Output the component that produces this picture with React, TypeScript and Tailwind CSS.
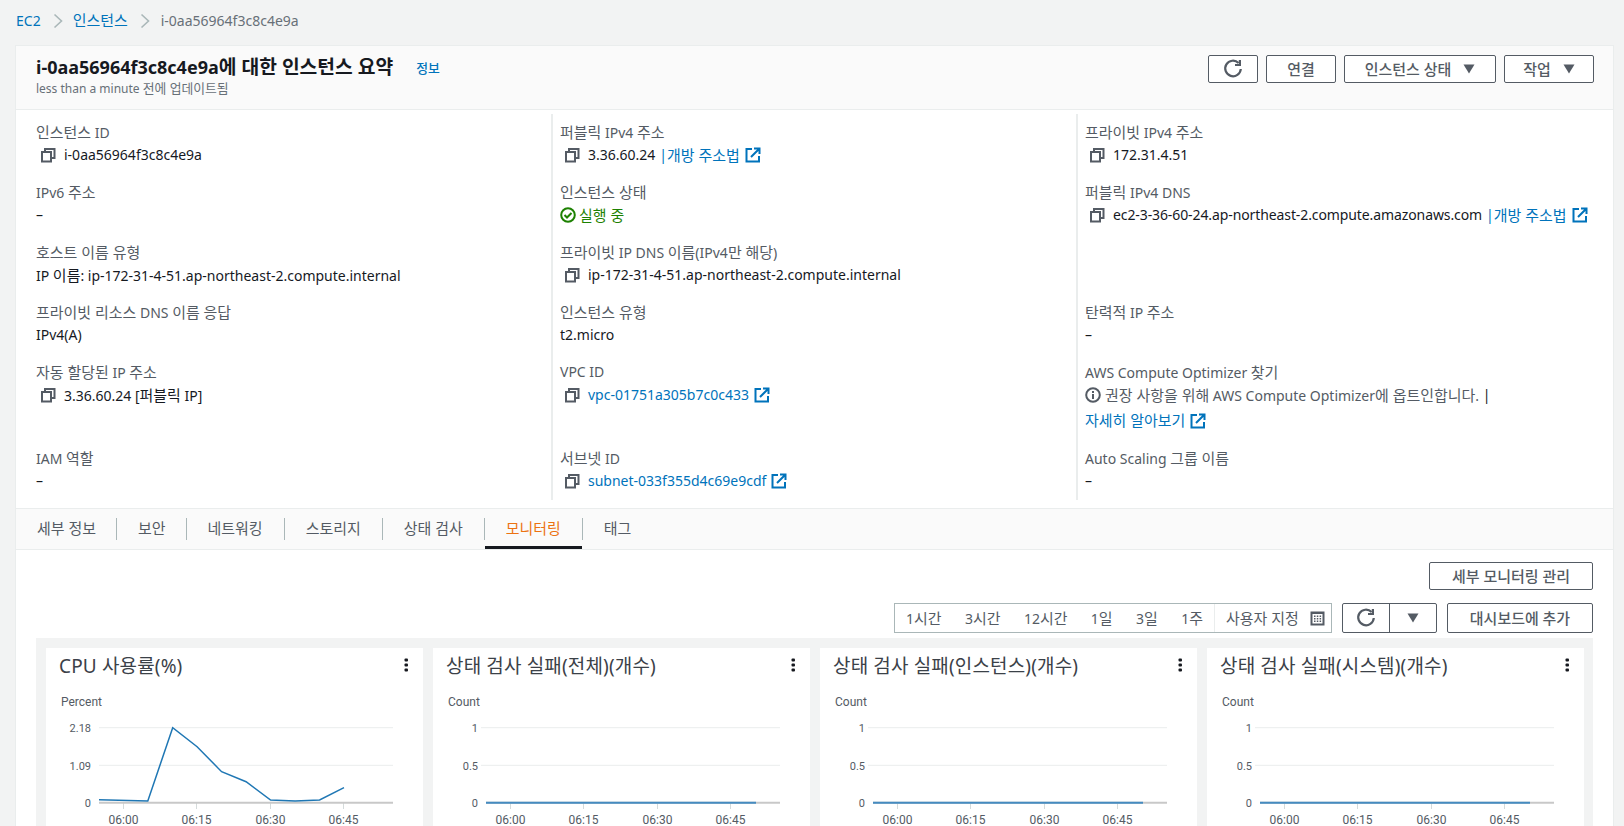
import type { ReactNode } from "react"

// Hangul runs a bit larger than the latin text around them
function Ko({ children }: { children: string }) {
  const parts = children.split(/([\uAC00-\uD7A3]+(?:\s+[\uAC00-\uD7A3]+)*)/)
  return (
    <>
      {parts.map((part, i) =>
        i % 2 === 1 ? (
          <span key={i} className="text-[1.07em]">{part}</span>
        ) : (
          part
        ),
      )}
    </>
  )
}

function CopyIcon() {
  return (
    <svg width="16" height="16" viewBox="0 0 16 16" fill="none" stroke="#545b64" strokeWidth="2" className="ml-[4px] mr-[8px] shrink-0">
      <rect x="2" y="5" width="9" height="9.5" />
      <path d="M5 5V2h9.5v9H11" />
    </svg>
  )
}

function ExternalIcon() {
  return (
    <svg width="16" height="16" viewBox="0 0 16 16" fill="none" stroke="#0073bb" strokeWidth="2" className="ml-[5px] inline-block shrink-0 align-[-3px]">
      <path d="M7 2H1.5v12.5H14V9" />
      <path d="M6 10l8-8M9 1.5h5.5V7" />
    </svg>
  )
}

function RefreshIcon() {
  return (
    <svg width="20" height="20" viewBox="0 0 18 18" fill="none" stroke="#545b64" strokeWidth="2">
      <path d="M14 3.6A7 7 0 1 0 16 9" />
      <path d="M15.2 1v4.4h-4.4" />
    </svg>
  )
}

function Caret() {
  return (
    <svg width="12" height="10" viewBox="0 0 12 10" fill="#545b64">
      <path d="M0.5 0.5h11L6 9.5z" />
    </svg>
  )
}

function Chevron() {
  return (
    <svg width="10" height="16" viewBox="0 0 10 16" fill="none" stroke="#aab7b8" strokeWidth="1.6">
      <path d="M1.5 1.5L8.5 8l-7 6.5" />
    </svg>
  )
}

function Kebab() {
  return (
    <svg width="4" height="14" viewBox="0 0 4 14" fill="#16191f" className="shrink-0">
      <rect x="0.5" y="0.5" width="3.5" height="3" rx="1" />
      <rect x="0.5" y="5.5" width="3.5" height="3" rx="1" />
      <rect x="0.5" y="10.5" width="3.5" height="3" rx="1" />
    </svg>
  )
}

function CalendarIcon() {
  return (
    <svg width="15" height="15" viewBox="0 0 15 15" className="ml-[11px]">
      <rect x="0.5" y="0.5" width="14" height="14" fill="#545b64" />
      <rect x="2.5" y="3" width="10" height="9.5" fill="#fff" />
      <path d="M4 4.5h1.5V6H4zM6.8 4.5h1.5V6H6.8zM9.6 4.5h1.5V6H9.6zM4 7h1.5v1.5H4zM6.8 7h1.5v1.5H6.8zM9.6 7h1.5v1.5H9.6zM4 9.5h1.5V11H4zM6.8 9.5h1.5V11H6.8zM9.6 9.5h1.5V11H9.6z" fill="#545b64" />
    </svg>
  )
}

function Link({ children }: { children: string }) {
  return <span className="text-[#0073bb]"><Ko>{children}</Ko></span>
}

function OpenMap() {
  return (
    <>
      <span className="ml-[4px] text-[#0073bb]">|</span>
      <Link>개방 주소법</Link>
      <ExternalIcon />
    </>
  )
}

function Cell({ label, className, children }: { label: string; className: string; children?: ReactNode }) {
  return (
    <div className={className}>
      {label ? <div className="h-[20px] leading-[20px] text-[#545b64]"><Ko>{label}</Ko></div> : null}
      {children ? <div className="mt-[3px] text-[#16191f]">{children}</div> : null}
    </div>
  )
}

function Row({ children }: { children: ReactNode }) {
  return <div className="flex h-[20px] items-center leading-[20px] whitespace-nowrap">{children}</div>
}

function Button({ className, children }: { className: string; children: ReactNode }) {
  return (
    <div className={`flex items-center justify-center rounded-[2px] border border-[#545b64] bg-white text-[14px] font-medium text-[#545b64] ${className}`}>
      {children}
    </div>
  )
}

const tabs = ["세부 정보", "보안", "네트워킹", "스토리지", "상태 검사", "모니터링", "태그"]
const ranges = ["1시간", "3시간", "12시간", "1일", "3일", "1주"]
const ticks = [
  { x: 77.5, label: "06:00" },
  { x: 150.5, label: "06:15" },
  { x: 224.5, label: "06:30" },
  { x: 297.5, label: "06:45" },
]

const cpuLine = "53,150.7 101.8,152 126.7,78.7 151.1,97.7 175.6,122.7 200.1,132.7 224.6,151 249.1,152 273.6,151 298,138.7"

function Chart({ title, unit, yLabels, line }: { title: string; unit: string; yLabels: string[]; line?: string }) {
  const left = line ? 53 : 48
  return (
    <div className="h-[200px] w-[377px] shrink-0 bg-white">
      <div className="flex h-[39px] items-center justify-between pl-[13px] pr-[15px] text-[19px] leading-[34px] tracking-[0.15px] text-[#3b4148] whitespace-nowrap">
        <span className="mb-[3px]">{title}</span>
        <span className="mb-[6px]"><Kebab /></span>
      </div>
      <svg width="377" height="161" viewBox="0 38 377 161" className="block [font-family:'Roboto','Noto_Sans_CJK_KR',sans-serif]">
        <text x="15" y="57" fontSize="12" fill="#545b64">{unit}</text>
        {[78.7, 116.3].map((y) => (
          <line key={y} x1={left} x2="347" y1={y} y2={y} stroke="#eaeded" strokeWidth="1" />
        ))}
        {yLabels.map((label, i) => (
          <text key={label} x="45" y={[83, 120.5, 158][i]} textAnchor="end" fontSize="11" fill="#545b64">{label}</text>
        ))}
        {ticks.map((t) => (
          <g key={t.label}>
            <line x1={t.x} x2={t.x} y1="154" y2="160" stroke="#d5dbdb" />
            <text x={t.x} y="175" textAnchor="middle" fontSize="12" fill="#545b64">{t.label}</text>
          </g>
        ))}
        <line x1="53" x2="347" y1="153.7" y2="153.7" stroke="#c8c8c8" strokeWidth="2" />
        {line ? (
          <polyline points={line} fill="none" stroke="#1f77b4" strokeWidth="1.5" />
        ) : (
          <line x1="53" x2="323" y1="153.7" y2="153.7" stroke="#458bc0" strokeWidth="2" />
        )}
      </svg>
    </div>
  )
}

export default function App() {
  return (
    <div className="h-[826px] w-[1624px] overflow-hidden bg-[#f2f3f3] text-[14px] [font-family:'Noto_Sans','Noto_Sans_CJK_KR',sans-serif]">
      <div className="flex h-[45px] items-center pb-[4px] pl-[16px]">
        <Link>EC2</Link>
        <span className="ml-[12px] mr-[10px] flex"><Chevron /></span>
        <Link>인스턴스</Link>
        <span className="ml-[12px] mr-[11px] flex"><Chevron /></span>
        <span className="text-[#687078]">i-0aa56964f3c8c4e9a</span>
      </div>

      <div className="ml-[15px] w-[1599px] border border-[#eaeded] bg-white">
        <div className="flex h-[64px] justify-between border-b border-[#eaeded] bg-[#fafafa] pl-[20px] pr-[19px]">
          <div className="pt-[8px]">
            <div className="flex h-[26px] items-center">
              <h1 className="text-[18px] font-bold leading-[26px] text-[#16191f]"><Ko>i-0aa56964f3c8c4e9a에 대한 인스턴스 요약</Ko></h1>
              <span className="ml-[23px] mt-[4px] text-[12px] font-medium text-[#0073bb]"><Ko>정보</Ko></span>
            </div>
            <p className="text-[12px] leading-[16px] text-[#687078]"><Ko>less than a minute 전에 업데이트됨</Ko></p>
          </div>
          <div className="flex gap-[8px] pt-[9px]">
            <Button className="h-[28px] w-[50px]"><RefreshIcon /></Button>
            <Button className="h-[28px] w-[70px]"><Ko>연결</Ko></Button>
            <Button className="h-[28px] w-[152px] gap-[12px]"><span><Ko>인스턴스 상태</Ko></span><Caret /></Button>
            <Button className="h-[28px] w-[90px] gap-[12px]"><span><Ko>작업</Ko></span><Caret /></Button>
          </div>
        </div>

        <div className="grid h-[398px] grid-cols-[535px_525px_1fr] pb-[8px] pt-[4px]">
          <div className="pl-[20px] pt-[8px]">
            <Cell label="인스턴스 ID" className="h-[60px]"><Row><CopyIcon />i-0aa56964f3c8c4e9a</Row></Cell>
            <Cell label="IPv6 주소" className="h-[60px]"><Row>–</Row></Cell>
            <Cell label="호스트 이름 유형" className="h-[60px]"><Row><span><Ko>IP 이름: ip-172-31-4-51.ap-northeast-2.compute.internal</Ko></span></Row></Cell>
            <Cell label="프라이빗 리소스 DNS 이름 응답" className="h-[60px]"><Row>IPv4(A)</Row></Cell>
            <Cell label="자동 할당된 IP 주소" className="h-[86px]"><Row><CopyIcon /><span><Ko>3.36.60.24 [퍼블릭 IP]</Ko></span></Row></Cell>
            <Cell label="IAM 역할" className="h-[50px]"><Row>–</Row></Cell>
          </div>
          <div className="border-l-2 border-[#eaeded] pl-[7px] pt-[8px]">
            <Cell label="퍼블릭 IPv4 주소" className="h-[60px]"><Row><CopyIcon />3.36.60.24<OpenMap /></Row></Cell>
            <Cell label="인스턴스 상태" className="h-[60px]">
              <Row>
                <svg width="16" height="16" viewBox="0 0 16 16" fill="none" stroke="#1d8102" strokeWidth="2" className="mr-[3px]">
                  <circle cx="8" cy="8" r="6.8" />
                  <path d="M4.5 8l2.5 2.5 4.5-4.5" />
                </svg>
                <span className="text-[#1d8102]"><Ko>실행 중</Ko></span>
              </Row>
            </Cell>
            <Cell label="프라이빗 IP DNS 이름(IPv4만 해당)" className="h-[60px]"><Row><CopyIcon />ip-172-31-4-51.ap-northeast-2.compute.internal</Row></Cell>
            <Cell label="인스턴스 유형" className="h-[60px]"><Row>t2.micro</Row></Cell>
            <Cell label="VPC ID" className="h-[86px]"><Row><CopyIcon /><Link>vpc-01751a305b7c0c433</Link><ExternalIcon /></Row></Cell>
            <Cell label="서브넷 ID" className="h-[50px]"><Row><CopyIcon /><Link>subnet-033f355d4c69e9cdf</Link><ExternalIcon /></Row></Cell>
          </div>
          <div className="border-l-2 border-[#eaeded] pl-[7px] pt-[8px]">
            <Cell label="프라이빗 IPv4 주소" className="h-[60px]"><Row><CopyIcon />172.31.4.51</Row></Cell>
            <Cell label="퍼블릭 IPv4 DNS" className="h-[60px]"><Row><CopyIcon /><span className="tracking-[-0.1px]">ec2-3-36-60-24.ap-northeast-2.compute.amazonaws.com</span><OpenMap /></Row></Cell>
            <Cell label="" className="h-[60px]" />
            <Cell label="탄력적 IP 주소" className="h-[60px]"><Row>–</Row></Cell>
            <Cell label="AWS Compute Optimizer 찾기" className="h-[86px]">
              <Row>
                <svg width="16" height="16" viewBox="0 0 16 16" fill="none" stroke="#545b64" strokeWidth="2" className="mr-[4px]">
                  <circle cx="8" cy="8" r="6.8" />
                  <path d="M8 7v5M8 4v2" />
                </svg>
                <span className="text-[#545b64]"><Ko>권장 사항을 위해 AWS Compute Optimizer에 옵트인합니다.</Ko>&nbsp;</span>|
              </Row>
              <div className="mt-[5px] h-[20px] leading-[20px]"><Link>자세히 알아보기</Link><ExternalIcon /></div>
            </Cell>
            <Cell label="Auto Scaling 그룹 이름" className="h-[50px]"><Row>–</Row></Cell>
          </div>
        </div>

        <div className="flex h-[42px] border-y border-[#eaeded] bg-[#fafafa]">
          {tabs.map((tab, i) => (
            <div key={tab} className="flex">
              <div className={`flex h-[40px] items-center pl-[21px] ${i < 2 ? "pr-[20px]" : "pr-[21px]"} ${i === 5 ? "border-b-[3px] border-[#16191f] pb-[1px] pt-[3px] text-[#ec7211]" : "pb-[2px] text-[#545b64]"}`}>
                <Ko>{tab}</Ko>
              </div>
              {i < 6 ? <div className="mt-[9px] h-[22px] w-px bg-[#aab7b8]" /> : null}
            </div>
          ))}
        </div>

        <div className="px-[20px] pt-[12px]">
          <div className="flex justify-end">
            <Button className="h-[28px] w-[164px]"><Ko>세부 모니터링 관리</Ko></Button>
          </div>
          <div className="mt-[13px] flex h-[30px] justify-end gap-[10px]">
            <div className="flex h-[30px] w-[438px] items-center border border-[#aab7b8] text-[#545b64]">
              <div className="flex h-full w-[320px] items-center justify-between border-r border-[#eaeded] pl-[11px] pr-[11px]">
                {ranges.map((r) => <span key={r}><Ko>{r}</Ko></span>)}
              </div>
              <span className="ml-[11px]"><Ko>사용자 지정</Ko></span>
              <CalendarIcon />
            </div>
            <div className="flex h-[30px] w-[95px] rounded-[2px] border border-[#545b64] bg-white">
              <div className="flex w-[47px] items-center justify-center border-r border-[#545b64]"><RefreshIcon /></div>
              <div className="flex flex-1 items-center justify-center"><Caret /></div>
            </div>
            <Button className="h-[30px] w-[146px]"><Ko>대시보드에 추가</Ko></Button>
          </div>
          <div className="mt-[5px] flex gap-[10px] bg-[#f2f3f3] p-[10px]">
            <Chart title="CPU 사용률(%)" unit="Percent" yLabels={["2.18", "1.09", "0"]} line={cpuLine} />
            <Chart title="상태 검사 실패(전체)(개수)" unit="Count" yLabels={["1", "0.5", "0"]} />
            <Chart title="상태 검사 실패(인스턴스)(개수)" unit="Count" yLabels={["1", "0.5", "0"]} />
            <Chart title="상태 검사 실패(시스템)(개수)" unit="Count" yLabels={["1", "0.5", "0"]} />
          </div>
        </div>
      </div>
    </div>
  )
}
